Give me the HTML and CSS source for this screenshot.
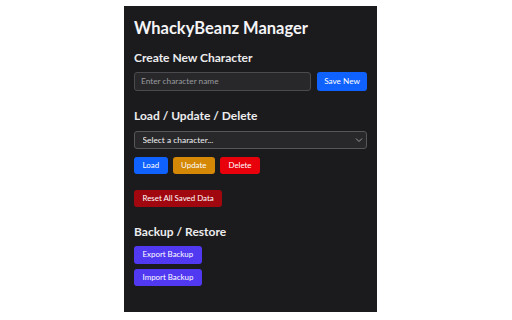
FILE: index.html
```html
<!DOCTYPE html>
<html lang="en">
<head>
<meta charset="utf-8">
<title>WhackyBeanz Manager</title>
<link rel="stylesheet" href="styles.css">
</head>
<body>
<div class="panel">
  <h1 class="title">WhackyBeanz Manager</h1>

  <h2 class="heading h-create">Create New Character</h2>
  <div class="row">
    <input class="text-input" type="text" placeholder="Enter character name">
    <button class="btn btn-blue btn-save">Save New</button>
  </div>

  <h2 class="heading h-load">Load / Update / Delete</h2>
  <div class="select-wrap">
    <select class="select">
      <option>Select a character...</option>
    </select>
    <svg class="chevron" width="8" height="6" viewBox="0 0 8 6"><path d="M1 1.5 L4 4.5 L7 1.5" fill="none" stroke="#9a9a9e" stroke-width="1"/></svg>
  </div>
  <div class="btn-row">
    <button class="btn btn-blue">Load</button>
    <button class="btn btn-amber">Update</button>
    <button class="btn btn-red">Delete</button>
  </div>
  <div class="reset-row">
    <button class="btn btn-darkred">Reset All Saved Data</button>
  </div>

  <h2 class="heading h-backup">Backup / Restore</h2>
  <div class="stack">
    <button class="btn btn-indigo">Export Backup</button>
    <button class="btn btn-indigo">Import Backup</button>
  </div>
</div>
</body>
</html>
```

FILE: styles.css
```css
html, body {
  margin: 0;
  padding: 0;
  background: #ffffff;
}
body {
  font-family: Lato, "Open Sans", sans-serif;
}
.panel {
  box-sizing: border-box;
  margin: 6px 0 0 124px;
  width: 253px;
  height: 306px;
  background: #1b1b1d;
  padding: 12px 10px 0 10px;
  color: #f2f2f4;
}
.title {
  margin: 0;
  font-size: 16.5px;
  line-height: 20px;
  font-weight: 700;
  color: #f4f4f6;
}
.heading {
  margin: 0;
  font-size: 12px;
  line-height: 14px;
  font-weight: 700;
  color: #ececee;
}
.h-create { margin-top: 13px; }
.h-load { margin-top: 18px; }
.h-backup { margin-top: 17.5px; }

.row {
  display: flex;
  gap: 6px;
  margin-top: 7px;
  height: 18.5px;
}
.text-input {
  box-sizing: border-box;
  flex: 1;
  min-width: 0;
  height: 18.5px;
  margin: 0;
  padding: 0 6px;
  background: #28282b;
  border: 1px solid #4a4a4f;
  border-radius: 3px;
  color: #e0e0e0;
  font-family: Lato, "Open Sans", sans-serif;
  font-size: 8.3px;
  outline: none;
}
.text-input::placeholder {
  color: #9a9a9e;
}
.btn {
  display: block;
  box-sizing: border-box;
  margin: 0;
  border: none;
  border-radius: 3px;
  height: 17.5px;
  padding: 0 8.5px;
  font-family: Lato, "Open Sans", sans-serif;
  font-size: 7.9px;
  color: #ffffff;
  line-height: 17.5px;
}
.btn-save {
  width: 50px;
  height: 18.5px;
  padding: 0;
  font-size: 8.2px;
}
.btn-blue { background: #0f62fe; }
.btn-amber { background: #d48806; }
.btn-red { background: #e8000b; }
.btn-darkred { background: #a1070f; }
.btn-indigo { background: #5139f2; }

.select-wrap {
  position: relative;
  margin-top: 8px;
  height: 18px;
}
.select {
  display: block;
  box-sizing: border-box;
  width: 100%;
  height: 18px;
  margin: 0;
  padding: 0 6px 0 7.5px;
  -webkit-appearance: none;
  appearance: none;
  background: #28282b;
  border: 1px solid #56565b;
  border-radius: 3px;
  color: #f0f0f2;
  font-family: Lato, "Open Sans", sans-serif;
  font-size: 8.4px;
  outline: none;
}
.chevron {
  position: absolute;
  right: 4px;
  top: 6px;
}
.btn-row {
  display: flex;
  gap: 5px;
  margin-top: 8px;
}
.reset-row {
  display: flex;
  margin-top: 15.5px;
}
.stack {
  display: flex;
  flex-direction: column;
  align-items: flex-start;
  gap: 5px;
  margin-top: 7.5px;
}
```
